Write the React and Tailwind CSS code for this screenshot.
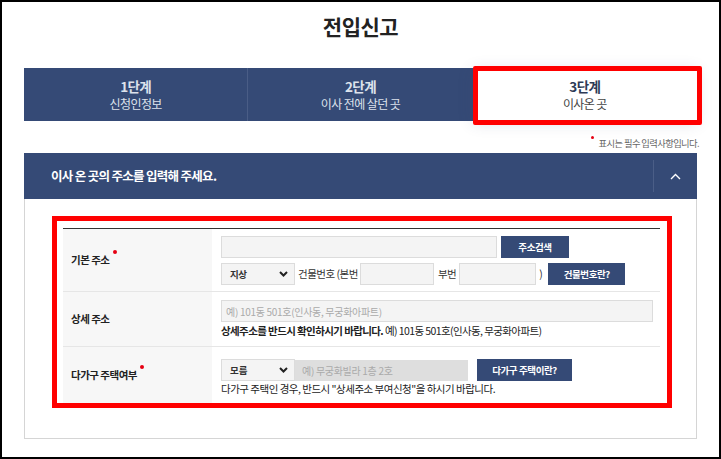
import React from 'react';

const navy = 'bg-[#354a76]';

function Chevron() {
  return (
    <svg width="9" height="6" viewBox="0 0 9 6" className="shrink-0">
      <polyline points="1,1 4.5,4.5 8,1" fill="none" stroke="#222" strokeWidth="2" />
    </svg>
  );
}

function FakeSelect({ value, className = '' }) {
  return (
    <div className={`flex items-center justify-between h-[22px] w-[74px] bg-[#f4f4f4] border border-[#dcdcdc] pl-[8px] pr-[6px] text-[9.5px] font-bold text-[#333] ${className}`}>
      <span>{value}</span>
      <Chevron />
    </div>
  );
}

function Btn({ children, className = '' }) {
  return (
    <button className={`${navy} h-[22px] text-white text-[9.5px] font-bold tracking-[-0.4px] ${className}`}>
      {children}
    </button>
  );
}

function Dot() {
  return <span className="inline-block w-[4px] h-[4px] rounded-full bg-[#e60012] align-top ml-[3px] -mt-[2px]" />;
}

function Row({ label, required, border = true, children }) {
  return (
    <div className={`grid grid-cols-[149px_1fr] ${border ? 'border-b border-[#e6e6e6]' : ''}`}>
      <div className="bg-[#f7f7f7] flex items-center pl-[8px] text-[10.5px] font-bold text-[#222] tracking-[-0.5px]">
        <span>
          {label}
          {required && <Dot />}
        </span>
      </div>
      <div className="pl-[9px]">{children}</div>
    </div>
  );
}

export default function App() {
  const tabs = [
    { step: '1단계', name: '신청인정보' },
    { step: '2단계', name: '이사 전에 살던 곳' },
  ];

  return (
    <div className="w-[721px] h-[459px] border-2 border-black bg-white overflow-hidden font-['Noto_Sans_CJK_KR','Noto_Sans',sans-serif] text-[#333]">
      {/* Title */}
      <h1 className="pt-[9px] text-center text-[21px] leading-[31px] font-bold text-[#222] tracking-[-0.5px]">
        전입신고
      </h1>

      {/* Steps */}
      <div className="mx-[22px] mt-[26px] grid grid-cols-3 h-[53px]">
        {tabs.map((t, i) => (
          <div
            key={t.step}
            className={`${navy} flex flex-col items-center justify-center text-[#dde2ec] ${i === 0 ? 'border-r border-[#4a5d86]' : ''}`}
          >
            <div className="text-[13.5px] font-bold leading-[17px] tracking-[-0.6px]">{t.step}</div>
            <div className="text-[12px] leading-[17px] tracking-[-0.6px]">{t.name}</div>
          </div>
        ))}
        <div className="relative bg-white flex flex-col items-center justify-center shadow-[0_2px_14px_rgba(60,70,110,0.18)]">
          <div className="text-[13.5px] font-bold leading-[17px] tracking-[-0.6px] text-[#2e3a55]">3단계</div>
          <div className="text-[12px] leading-[17px] tracking-[-0.6px] text-[#444]">이사온 곳</div>
          <div className="absolute -top-[2px] -bottom-[4px] left-0 -right-[5px] border-[5px] border-[#ff0000] rounded-[2px]" />
        </div>
      </div>

      {/* Required note */}
      <div className="mt-[15px] pr-[20px] flex justify-end items-start text-[9.3px] leading-[14px] text-[#666] tracking-[-0.6px]">
        <span className="inline-block w-[3px] h-[3px] rounded-full bg-[#e60012] mr-[5px] mt-[0px]" />
        <span>표시는 필수 입력사항입니다.</span>
      </div>

      {/* Accordion header */}
      <div className={`mx-[22px] mt-[3px] h-[46px] ${navy} flex items-center`}>
        <div className="flex-1 pl-[27px] text-white text-[12.5px] font-bold tracking-[-0.7px]">
          이사 온 곳의 주소를 입력해 주세요.
        </div>
        <div className="h-[32px] w-px bg-[#4b5e87]" />
        <div className="w-[43px] flex justify-center">
          <svg width="11" height="7" viewBox="0 0 11 7">
            <polyline points="1,6 5.5,1.5 10,6" fill="none" stroke="#fff" strokeWidth="1.4" />
          </svg>
        </div>
      </div>

      {/* Panel body */}
      <div className="mx-[22px] border border-t-0 border-[#d5d5d5] pt-[17px] pl-[27px] pr-[24px] pb-[30px]">
        <div className="border-[5px] border-[#ff0000] pt-[7px] pl-[6px] pr-[7px]">
          <div className="border-t border-[#333]">
            {/* 기본 주소 */}
            <Row label="기본 주소" required>
              <div className="pt-[7px] pb-[7px] h-[62px]">
                <div className="flex items-center gap-[4px]">
                  <div className="w-[276px] h-[22px] bg-[#f4f4f4] border border-[#dcdcdc]" />
                  <Btn className="w-[68px]">주소검색</Btn>
                </div>
                <div className="mt-[5px] flex items-center text-[10.5px] tracking-[-0.5px] text-[#333]">
                  <FakeSelect value="지상" />
                  <span className="ml-[3px] mr-[2px]">건물번호 (본번</span>
                  <div className="w-[74px] h-[22px] bg-[#f4f4f4] border border-[#dcdcdc]" />
                  <span className="ml-[4px] mr-[3px]">부번</span>
                  <div className="w-[77px] h-[22px] bg-[#f4f4f4] border border-[#dcdcdc]" />
                  <span className="ml-[3px] mr-[6px]">)</span>
                  <Btn className="w-[77px]">건물번호란?</Btn>
                </div>
              </div>
            </Row>

            {/* 상세 주소 */}
            <Row label="상세 주소">
              <div className="pt-[8px] h-[54px]">
                <div className="w-[432px] h-[22px] bg-[#f4f4f4] border border-[#dcdcdc] flex items-center pl-[4px] text-[10px] text-[#aaa] tracking-[-0.3px]">
                  예) 101동 501호(인사동, 무궁화아파트)
                </div>
                <div className="mt-[1px] text-[10.5px] leading-[16px] tracking-[-0.6px] text-[#222]">
                  <span className="font-bold">상세주소를 반드시 확인하시기 바랍니다.</span> 예) 101동 501호(인사동, 무궁화아파트)
                </div>
              </div>
            </Row>

            {/* 다가구 주택여부 */}
            <Row label="다가구 주택여부" required border={false}>
              <div className="pt-[12px] h-[56px]">
                <div className="flex items-center">
                  <FakeSelect value="모름" className="h-[21px]" />
                  <div className="w-[173px] h-[21px] bg-[#dedede] flex items-center pl-[7px] text-[10px] text-[#aaa] tracking-[-0.3px]">
                    예) 무궁화빌라 1층 2호
                  </div>
                  <Btn className="w-[95px] ml-[9px]">다가구 주택이란?</Btn>
                </div>
                <div className="mt-[1px] text-[10.5px] leading-[14px] tracking-[-0.5px] text-[#222]">
                  다가구 주택인 경우, 반드시 "상세주소 부여신청"을 하시기 바랍니다.
                </div>
              </div>
            </Row>
          </div>
        </div>
      </div>
    </div>
  );
}
